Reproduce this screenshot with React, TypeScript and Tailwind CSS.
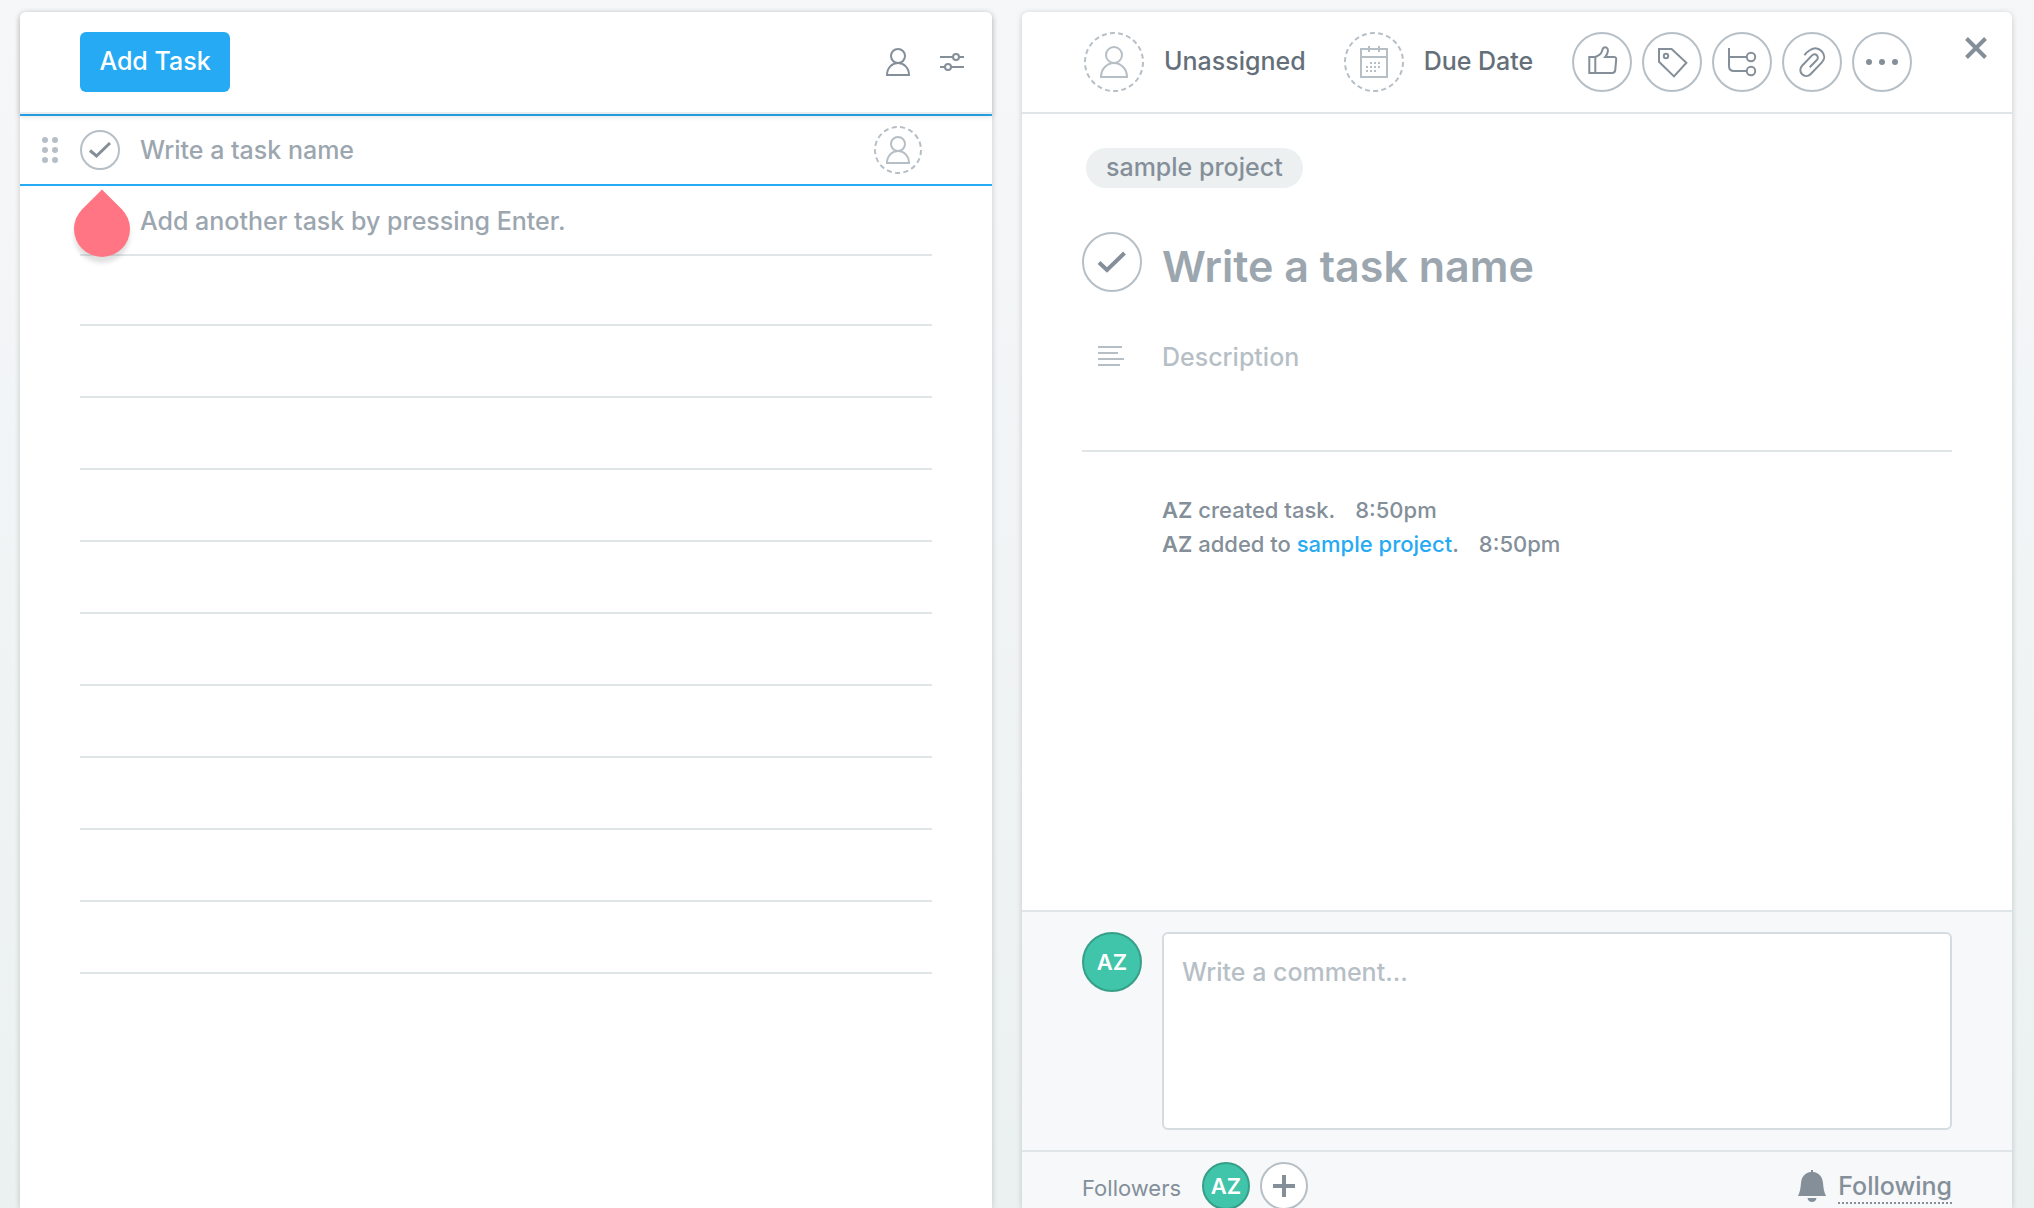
import type { ReactNode } from "react";

function UserIcon() {
  return (
    <svg width="24" height="28" viewBox="0 0 24 28" fill="none" stroke="currentColor" strokeWidth="2" aria-hidden="true">
      <circle cx="12" cy="8" r="7" />
      <path d="M1 27C1 20 6 15 12 15s11 5 11 12z" />
    </svg>
  );
}

function UserIconLarge() {
  return (
    <svg width="28" height="32" viewBox="0 0 28 32" fill="none" stroke="currentColor" strokeWidth="2" aria-hidden="true">
      <circle cx="14" cy="9" r="8" />
      <path d="M1 31C1 23 7 17 14 17s13 6 13 14z" />
    </svg>
  );
}

function SlidersIcon() {
  return (
    <svg width="24" height="18" viewBox="0 0 24 18" fill="none" stroke="currentColor" strokeWidth="2" aria-hidden="true">
      <path d="M0 4h13M19 4h5M0 14h5M11 14h13" />
      <circle cx="16" cy="4" r="3" />
      <circle cx="8" cy="14" r="3" />
    </svg>
  );
}

const calendarDays: [number, number][] = [
  [11, 17], [15, 17], [19, 17],
  [7, 21], [11, 21], [15, 21], [19, 21],
  [7, 25], [11, 25], [15, 25],
];

function CalendarIcon() {
  return (
    <svg width="28" height="32" viewBox="0 0 28 32" fill="none" stroke="currentColor" strokeWidth="2" aria-hidden="true">
      <path d="M1 3h26v28H1zM1 11h26M9 0v6M19 0v6" />
      {calendarDays.map(([x, y]) => (
        <rect key={`${x}-${y}`} x={x - 1} y={y - 1} width="2" height="2" fill="currentColor" stroke="none" />
      ))}
    </svg>
  );
}

function ThumbIcon() {
  return (
    <svg width="32" height="32" viewBox="0 0 32 32" fill="none" stroke="currentColor" strokeWidth="2" aria-hidden="true">
      <path d="M3.3 11H9.3V27H3.3z" />
      <path d="M9.3 11C12 10 14.8 8.2 15.6 6.2 16.4 4.4 16.3 1.2 19 1.2c2.6 0 3.2 2.4 2.8 4.6-.4 2-1.6 4-2.6 5.2H28c1.6 0 2.3.8 2.2 2.2l-.9 10.4c-.2 2.2-1 3.4-3 3.4h-17" />
    </svg>
  );
}

function TagIcon() {
  return (
    <svg width="32" height="32" viewBox="0 0 32 32" fill="none" stroke="currentColor" strokeWidth="2" aria-hidden="true">
      <path d="M3 3h12.6L30.4 16.7 18 30.4 3 15.8z" />
      <circle cx="10" cy="10" r="2.2" />
    </svg>
  );
}

function SubtaskIcon() {
  return (
    <svg width="32" height="32" viewBox="0 0 32 32" fill="none" stroke="currentColor" strokeWidth="2" aria-hidden="true">
      <path d="M3 2v18c0 3 2 5 5 5h13M3 11h18" />
      <circle cx="25" cy="11" r="4.2" />
      <circle cx="25" cy="25" r="4.2" />
    </svg>
  );
}

function ClipIcon() {
  return (
    <svg width="32" height="32" viewBox="0 0 32 32" fill="none" stroke="currentColor" strokeWidth="2" aria-hidden="true">
      <path d="M8.4 9.2C9.6 7.4 11.8 5.4 14.1 4c3.8-2.5 8.2-2.2 11.4 1 3.4 3.4 3.6 8 .4 11.4L14.5 28.2c-2.4 2.4-6 2.4-8.4 0-2.4-2.4-2.4-6 0-8.4L15.8 9.6c1.6-1.6 3.6-1.7 5-.3 1.4 1.4 1.4 3.4-.2 5l-6.9 7" />
    </svg>
  );
}

function DotsIcon() {
  return (
    <svg width="32" height="32" viewBox="0 0 32 32" fill="currentColor" aria-hidden="true">
      <circle cx="3" cy="16" r="3" />
      <circle cx="16" cy="16" r="3" />
      <circle cx="29" cy="16" r="3" />
    </svg>
  );
}

function BellIcon() {
  return (
    <svg width="28" height="32" viewBox="0 0 28 32" fill="currentColor" aria-hidden="true">
      <path d="M0 26C2 22 2.6 18 3 13 3.5 6.500 7.500 2.300 13 2V0h2v2c5.500.3 9.500 4.500 10 11 .4 5 1 9 3 13z" />
      <path d="M9.500 28h9c-.4 2.500-2 4-4.500 4s-4.100-1.500-4.500-4z" />
    </svg>
  );
}

function DashedCircle({ large, children }: { large?: boolean; children: ReactNode }) {
  return (
    <span className={large ? "relative grid size-[60px] shrink-0 place-items-center" : "relative grid size-12 shrink-0 place-items-center"}>
      <svg className="absolute inset-0 size-full" viewBox={large ? "0 0 60 60" : "0 0 48 48"} fill="none" stroke="currentColor" strokeWidth="2" aria-hidden="true">
        {large ? (
          <circle cx="30" cy="30" r="29" pathLength="220" strokeDasharray="6 4" />
        ) : (
          <circle cx="24" cy="24" r="23" pathLength="170" strokeDasharray="6 4" />
        )}
      </svg>
      {children}
    </span>
  );
}

function CircleButton({ label, children }: { label: string; children: ReactNode }) {
  return (
    <button type="button" aria-label={label} className="grid size-[60px] shrink-0 place-items-center rounded-full border-2 border-[#b7bfc6] bg-white text-[#848f99]">
      {children}
    </button>
  );
}

const headerActions = [
  { label: "Like", icon: <ThumbIcon /> },
  { label: "Tags", icon: <TagIcon /> },
  { label: "Subtasks", icon: <SubtaskIcon /> },
  { label: "Attach", icon: <ClipIcon /> },
  { label: "More actions", icon: <DotsIcon /> },
];

function TaskList() {
  return (
    <section className="flex min-w-0 flex-[972] flex-col rounded-t-md bg-white shadow-[0_1px_6px_rgba(0,0,0,0.18)]">
      <header className="relative z-10 flex h-[102px] shrink-0 items-center rounded-t-md border-b-2 border-[#eaecee] bg-white pr-7 pl-[60px] shadow-[0_2px_6px_rgba(0,0,0,0.14)]">
        <button type="button" className="h-[60px] w-[150px] rounded-md bg-[#27aaf4] text-[25px] font-medium text-white">
          Add Task
        </button>
        <div className="ml-auto flex items-center gap-[30px] text-[#848f99]">
          <button type="button" aria-label="Filter by assignee"><UserIcon /></button>
          <button type="button" aria-label="View options"><SlidersIcon /></button>
        </div>
      </header>

      <div className="flex h-[72px] shrink-0 items-center border-y-2 border-[#27aaf4] pr-[70px] pl-[22px]">
        <button type="button" aria-label="Reorder task" className="text-[#b7bfc6]">
          <svg width="16" height="26" viewBox="0 0 16 26" fill="currentColor" aria-hidden="true">
            <circle cx="3" cy="3" r="3" />
            <circle cx="13" cy="3" r="3" />
            <circle cx="3" cy="13" r="3" />
            <circle cx="13" cy="13" r="3" />
            <circle cx="3" cy="23" r="3" />
            <circle cx="13" cy="23" r="3" />
          </svg>
        </button>
        <button type="button" aria-label="Complete task" className="ml-[22px] grid size-10 shrink-0 place-items-center rounded-full border-2 border-[#b7bfc6] text-[#848f99]">
          <svg width="36" height="36" viewBox="2 2 36 36" fill="none" stroke="currentColor" strokeWidth="3" aria-hidden="true">
            <path d="M10 20.500l6.500 5.500L30 13" />
          </svg>
        </button>
        <input type="text" aria-label="Task name" placeholder="Write a task name" className="ml-5 h-12 min-w-0 flex-1 bg-transparent text-[25px] font-medium placeholder:text-[#9ca6af] outline-none" />
        <button type="button" aria-label="Assign task" className="text-[#b7bfc6]">
          <DashedCircle><UserIcon /></DashedCircle>
        </button>
      </div>

      <div className="relative mx-[60px] h-[70px] shrink-0 border-b-2 border-[#e0e6e8]">
        <p className="pl-[60px] text-[25px] leading-[70px] font-medium text-[#9ca6af]">Add another task by pressing Enter.</p>
        <div className="absolute top-[15px] -left-1.5 drop-shadow-[0_6px_2px_rgba(0,0,0,0.12)]">
          <div className="size-14 rotate-45 rounded-full rounded-tl-none bg-[#ff7583]" />
        </div>
      </div>
      <div className="mx-[60px] h-[70px] shrink-0 border-b-2 border-[#e0e6e8]" />
      {Array.from({ length: 9 }, (_, i) => (
        <div key={i} className="mx-[60px] h-[72px] shrink-0 border-b-2 border-[#e0e6e8]" />
      ))}
    </section>
  );
}

function TaskDetails() {
  return (
    <section className="flex min-w-0 flex-[990] flex-col rounded-t-md bg-white shadow-[0_1px_6px_rgba(0,0,0,0.18)]">
      <header className="flex h-[102px] shrink-0 items-center border-b-2 border-[#e0e6e8] pr-[25px] pl-[62px] text-[25px] font-medium text-[#646f79]">
        <button type="button" className="flex items-center gap-5">
          <span className="text-[#b7bfc6]"><DashedCircle large><UserIconLarge /></DashedCircle></span>
          Unassigned
        </button>
        <button type="button" className="ml-[38px] flex items-center gap-5 whitespace-nowrap">
          <span className="text-[#b7bfc6]"><DashedCircle large><CalendarIcon /></DashedCircle></span>
          Due Date
        </button>
        <div className="ml-auto flex gap-2.5">
          {headerActions.map((action) => (
            <CircleButton key={action.label} label={action.label}>{action.icon}</CircleButton>
          ))}
        </div>
        <button type="button" aria-label="Close" className="mt-[25px] ml-[53px] self-start text-[#848f99]">
          <svg width="22" height="22" viewBox="0 0 22 22" fill="none" stroke="currentColor" strokeWidth="4" aria-hidden="true">
            <path d="M1.500 1.500l19 19M20.500 1.500l-19 19" />
          </svg>
        </button>
      </header>

      <div className="min-h-0 flex-1 px-[60px] pt-[34px]">
        <div className="flex">
          <a href="#" className="ml-1 flex h-10 items-center rounded-full bg-[#ecf0f1] px-5 text-[25px] font-medium text-[#848f99]">
            sample project
          </a>
        </div>
        <div className="mt-11 flex items-start gap-5">
          <button type="button" aria-label="Complete task" className="grid size-[60px] shrink-0 place-items-center rounded-full border-2 border-[#b7bfc6] text-[#848f99]">
            <svg width="56" height="56" viewBox="2 2 56 56" fill="none" stroke="currentColor" strokeWidth="4" aria-hidden="true">
              <path d="M17 30.500l8 7.500 17.500-17" />
            </svg>
          </button>
          <input type="text" aria-label="Task title" placeholder="Write a task name" className="h-[68px] min-w-0 flex-1 bg-transparent text-[43px] font-semibold placeholder:text-[#9ca6af] outline-none" />
        </div>
        <div className="mt-8 flex h-[120px] items-start border-b-2 border-[#e0e6e8]">
          <svg className="mt-3.5 mr-[38px] ml-4 shrink-0 text-[#b7bfc6]" width="26" height="20" viewBox="0 0 26 20" fill="none" stroke="currentColor" strokeWidth="2" aria-hidden="true">
            <path d="M0 1h24M0 7h20M0 13h26M0 19h22" />
          </svg>
          <input type="text" aria-label="Description" placeholder="Description" className="h-[50px] min-w-0 flex-1 bg-transparent text-[25px] font-medium placeholder:text-[#b7bfc6] outline-none" />
        </div>
        <div className="mt-[41px] pl-20 text-[22px] leading-[34px] font-medium text-[#848f99]">
          <p><strong className="font-semibold">AZ</strong> created task.<span className="ml-5">8:50pm</span></p>
          <p><strong className="font-semibold">AZ</strong> added to <a href="#" className="text-[#27aaf4]">sample project</a>.<span className="ml-5">8:50pm</span></p>
        </div>
      </div>

      <div className="shrink-0 bg-[#f6f8f9]">
        <div className="flex items-start gap-5 border-y-2 border-[#e0e6e8] px-[60px] py-5">
          <span className="grid size-[60px] shrink-0 place-items-center rounded-full border-2 border-[#369f87] bg-[#40c4aa] text-[22px] font-semibold text-white">AZ</span>
          <textarea aria-label="Comment" placeholder="Write a comment..." className="h-[198px] min-w-0 flex-1 resize-none rounded-md border-2 border-[#d5dce0] bg-white px-[18px] py-[18px] text-[25px] leading-10 font-medium placeholder:text-[#b7bfc6] outline-none" />
        </div>
        <div className="flex h-14 items-start px-[60px] pt-2.5 text-[#848f99]">
          <span className="w-[120px] text-[22px] leading-[52px]">Followers</span>
          <span className="grid size-12 shrink-0 place-items-center rounded-full border-2 border-[#369f87] bg-[#40c4aa] text-[22px] font-semibold text-white">AZ</span>
          <button type="button" aria-label="Add follower" className="ml-2.5 grid size-12 shrink-0 place-items-center rounded-full border-2 border-[#b7bfc6] bg-white">
            <svg width="22" height="22" viewBox="0 0 22 22" fill="none" stroke="currentColor" strokeWidth="4" aria-hidden="true">
              <path d="M11 0v22M0 11h22" />
            </svg>
          </button>
          <button type="button" className="ml-auto flex items-start gap-3 pt-2 text-[25px] font-medium">
            <BellIcon />
            <span className="border-b-2 border-dotted border-[#848f99] pt-0.5 pb-0.5 leading-7">Following</span>
          </button>
        </div>
      </div>
    </section>
  );
}

export default function App() {
  return (
    <main className="flex h-screen gap-[30px] overflow-hidden bg-linear-to-b from-[#f6f7f9] via-[#f0f4f5] to-[#ebf0f1] pt-3 pr-[22px] pl-5 font-[Inter,sans-serif]">
      <TaskList />
      <TaskDetails />
    </main>
  );
}
